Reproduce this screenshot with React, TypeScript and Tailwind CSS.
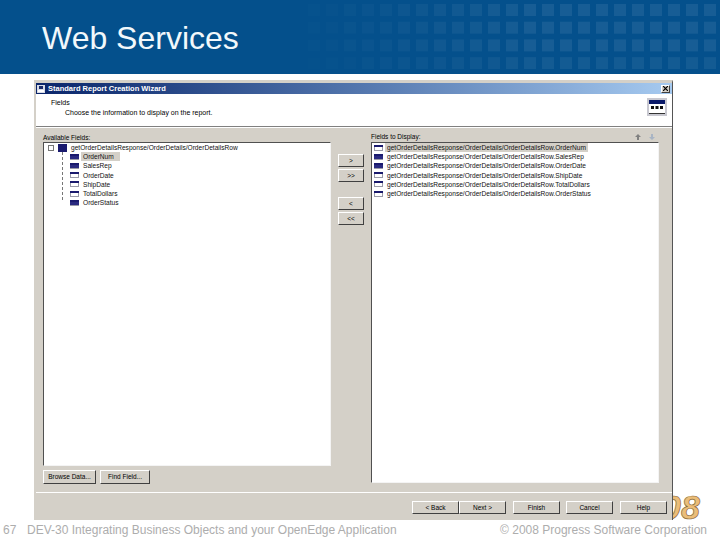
import React from "react";

const PREFIX = "getOrderDetailsResponse/OrderDetails/OrderDetailsRow";
const FIELDS = ["OrderNum", "SalesRep", "OrderDate", "ShipDate", "TotalDollars", "OrderStatus"];

function BannerPattern() {
  const cells = [];
  for (let c = 0; c < 25; c++) {
    for (let r = 0; r < 4; r++) {
      // columns fade in from the left, rightmost square starts at x=704
      const o = Math.min(c, 14) * 0.0055 * (r === 3 ? 0.8 : 1);
      cells.push(<rect key={`${c}-${r}`} x={c * 18 + 2} y={r * 17.7 + 4} width="12" height="12" fill="#ffffff" opacity={o} />);
    }
  }
  return (
    <svg className="absolute right-0 top-0" width="450" height="74">
      {cells}
    </svg>
  );
}

function FieldIcon({ dark }: { dark: boolean }) {
  return (
    <svg width="9" height="6" className="shrink-0">
      <rect x="0.5" y="0.5" width="8" height="5" fill="#ffffff" stroke="#9a9aa8" />
      <rect x="0" y="0" width="9" height="2" fill="#1a1a6e" />
      {dark && <rect x="0" y="2" width="9" height="3" fill="#2a2a80" />}
    </svg>
  );
}

function Btn({ label, className }: { label: string; className: string }) {
  return (
    <div
      className={`flex items-center justify-center border border-t-white border-l-white border-r-[#404040] border-b-[#404040] bg-[#d4d0c8] text-[6.5px] text-black ${className}`}
    >
      {label}
    </div>
  );
}

export default function App() {
  return (
    <div className="relative flex h-[540px] w-[720px] flex-col overflow-hidden bg-white font-['Liberation_Sans',Arial,sans-serif]">
      {/* Title band */}
      <div className="relative h-[74px] shrink-0 bg-[#04508c] pl-[42px] pt-[19px]">
        <BannerPattern />
        <h1 className="relative text-[32px] leading-[38px] font-normal text-[#f2f8fb]">Web Services</h1>
      </div>

      {/* 08 logo behind the window */}
      <div className="absolute left-[662px] top-[490px] text-[34px] leading-[34px] font-bold italic text-[#ebbd78] [-webkit-text-stroke:0.7px_#8a6a38]">
        08
      </div>

      {/* Wizard window */}
      <div className="relative ml-[34px] mt-[6px] flex h-[440px] w-[639px] flex-col border-[2px] border-r-[1px] border-b-0 border-[#d4d0c8] border-r-[#555555] bg-[#d4d0c8]">
        <div className="mt-[1px] flex h-[11px] shrink-0 items-center justify-between bg-gradient-to-r from-[#0a246a] to-[#a6caf0] pl-[1px] pr-[2px]">
          <div className="flex items-center gap-[3px]">
            <svg width="8" height="8">
              <rect width="8" height="8" fill="#d8dce8" />
              <rect x="2" y="1" width="4" height="3" fill="#1a2a6a" />
              <rect x="1" y="5" width="6" height="2" fill="#ffffff" />
            </svg>
            <span className="text-[7.5px] leading-none font-bold text-white">Standard Report Creation Wizard</span>
          </div>
          <div className="flex h-[8px] w-[9px] items-center justify-center border border-t-white border-l-white border-r-[#404040] border-b-[#404040] bg-[#d4d0c8]">
            <svg width="5" height="5" viewBox="0 0 5 5">
              <path d="M0 0L5 5M5 0L0 5" stroke="#000" strokeWidth="1.2" />
            </svg>
          </div>
        </div>

        {/* Header */}
        <div className="flex h-[32px] shrink-0 justify-between bg-white pl-[15px] pr-[5px] pt-[4px]">
          <div className="text-[7px] leading-[10px] text-black">
            <p>Fields</p>
            <p className="pl-[14px]">Choose the information to display on the report.</p>
          </div>
          <div className="h-[18px] w-[20px] bg-[#c8c8d0] p-[2px]">
            <svg width="16" height="14">
              <rect width="16" height="14" fill="#ffffff" />
              <rect width="16" height="4" fill="#0a1a6a" />
              <rect x="2" y="6" width="3" height="3" fill="#111" />
              <rect x="6.5" y="6" width="3" height="3" fill="#111" />
              <rect x="11" y="6" width="3" height="3" fill="#111" />
              <rect y="13" width="16" height="1" fill="#333" />
            </svg>
          </div>
        </div>
        <div className="h-[2px] shrink-0 border-t border-t-[#808080] border-b border-b-white" />

        {/* Field pickers */}
        <div className="flex h-[365px] shrink-0 border-b border-b-white pl-[7px] pt-[3px]">
          <div className="flex w-[288px] flex-col">
            <p className="h-[11px] pt-[2px] text-[6.5px] leading-[9px] text-black">Available Fields:</p>
            <div className="relative h-[324px] border border-t-[#505050] border-l-[#505050] border-r-[#f4f4f4] border-b-[#f4f4f4] bg-white text-[6.6px] leading-[9.2px] text-[#111]">
              <div className="flex h-[9.2px] items-center pl-[4px]">
                <span className="mr-[4px] h-[6px] w-[6px] border border-[#777777] bg-white" />
                <span className="mr-[4px] h-[8px] w-[9px] bg-[#1a1a6e]" />
                <span>{PREFIX}</span>
              </div>
              <div className="absolute left-[18px] top-[9px] h-[48px] border-l border-dashed border-l-[#777777]" />
              {FIELDS.map((f, i) => (
                <div key={f} className="flex h-[9.2px] items-center pl-[26px]">
                  <FieldIcon dark={i < 2 || i === 5} />
                  <span className={`ml-[2px] px-[2px] ${i === 0 ? "bg-[#d4d0c8] pr-[6px]" : ""}`}>{f}</span>
                </div>
              ))}
            </div>
            <div className="mt-[4px] flex gap-[4px]">
              <Btn label="Browse Data..." className="h-[14px] w-[53px]" />
              <Btn label="Find Field..." className="h-[14px] w-[50px]" />
            </div>
          </div>

          <div className="ml-[7px] flex w-[26px] flex-col pt-[23px]">
            <Btn label=">" className="h-[13px]" />
            <Btn label=">>" className="mt-[2px] h-[13px]" />
            <Btn label="<" className="mt-[15px] h-[13px]" />
            <Btn label="<<" className="mt-[2px] h-[13px]" />
          </div>

          <div className="ml-[7px] flex w-[288px] flex-col">
            <div className="flex h-[11px] items-center justify-between pr-[4px]">
              <p className="text-[6.5px] leading-[9px] text-black">Fields to Display:</p>
              <div className="flex gap-[8px]">
                <svg width="6" height="6" viewBox="0 0 6 6">
                  <path d="M3 0L6 3H4V6H2V3H0Z" fill="#808080" />
                </svg>
                <svg width="6" height="6" viewBox="0 0 6 6">
                  <path d="M3 6L6 3H4V0H2V3H0Z" fill="#a8b4c4" />
                </svg>
              </div>
            </div>
            <div className="h-[341px] border border-t-[#505050] border-l-[#505050] border-r-[#f4f4f4] border-b-[#f4f4f4] bg-white text-[6.6px] leading-[9.2px] text-[#111]">
              {FIELDS.map((f, i) => (
                <div key={f} className="flex h-[9.2px] items-center pl-[2px]">
                  <FieldIcon dark={i === 1 || i === 2} />
                  <span className={`ml-[2px] px-[2px] ${i === 0 ? "bg-[#d4d0c8]" : ""}`}>
                    {PREFIX}.{f}
                  </span>
                </div>
              ))}
            </div>
          </div>
        </div>

        {/* Wizard buttons */}
        <div className="flex flex-1 justify-end pr-[5px] pt-[8px]">
          <Btn label="< Back" className="h-[13px] w-[47px]" />
          <Btn label="Next >" className="h-[13px] w-[47px]" />
          <Btn label="Finish" className="ml-[7px] h-[13px] w-[47px]" />
          <Btn label="Cancel" className="ml-[6px] h-[13px] w-[47px]" />
          <Btn label="Help" className="ml-[7px] h-[13px] w-[47px]" />
        </div>
      </div>

      {/* Footer */}
      <div className="relative flex flex-1 items-center pl-[3px] text-[12px] leading-none text-[#adadad]">
        <span className="w-[24px]">67</span>
        <span>DEV-30 Integrating Business Objects and your OpenEdge Application</span>
        <span className="ml-auto pr-[13px]">© 2008 Progress Software Corporation</span>
      </div>
    </div>
  );
}
